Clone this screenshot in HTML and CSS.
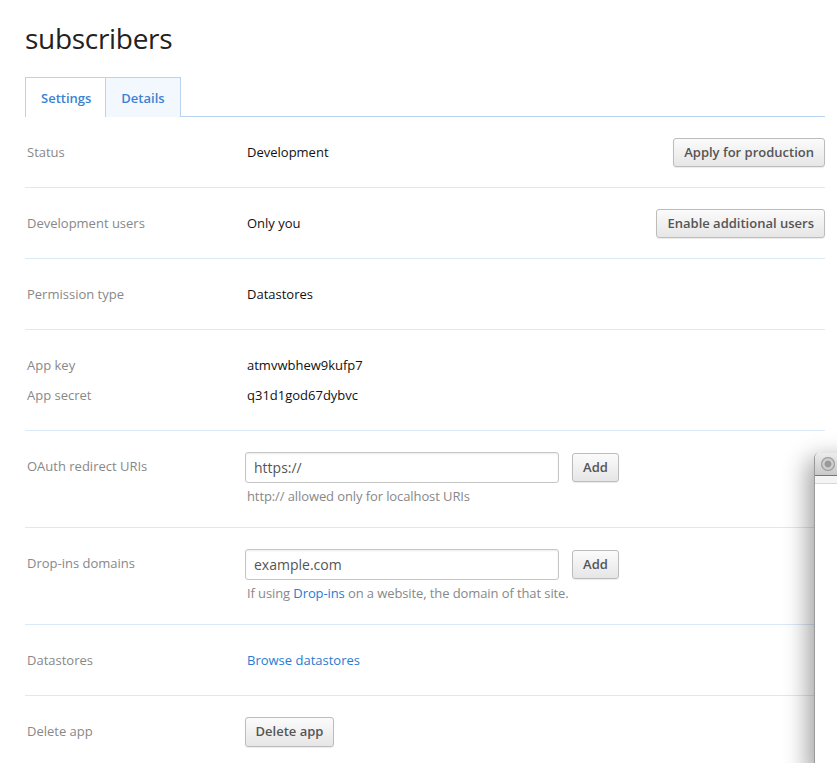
FILE: index.html
```html
<!DOCTYPE html>
<html>
<head>
<meta charset="utf-8">
<link rel="stylesheet" href="styles.css">
</head>
<body>
<div class="page">
  <h1 class="title">subscribers</h1>
  <div class="tabs">
    <div class="tab active">Settings</div>
    <div class="tab">Details</div>
  </div>
  <div class="rows">
    <div class="row">
      <div class="label">Status</div>
      <div class="value">Development</div>
      <div class="action"><button class="btn">Apply for production</button></div>
    </div>
    <div class="row">
      <div class="label">Development users</div>
      <div class="value">Only you</div>
      <div class="action"><button class="btn">Enable additional users</button></div>
    </div>
    <div class="row">
      <div class="label">Permission type</div>
      <div class="value">Datastores</div>
    </div>
    <div class="row multi">
      <div class="pair"><div class="label">App key</div><div class="value">atmvwbhew9kufp7</div></div>
      <div class="pair"><div class="label">App secret</div><div class="value">q31d1god67dybvc</div></div>
    </div>
    <div class="row form">
      <div class="label">OAuth redirect URIs</div>
      <div class="field">
        <div class="inputline">
          <input class="input" type="text" value="https://">
          <button class="btn small">Add</button>
        </div>
        <div class="help">http:// allowed only for localhost URIs</div>
      </div>
    </div>
    <div class="row form">
      <div class="label">Drop-ins domains</div>
      <div class="field">
        <div class="inputline">
          <input class="input" type="text" value="example.com">
          <button class="btn small">Add</button>
        </div>
        <div class="help">If using <a class="link" href="#">Drop-ins</a> on a website, the domain of that site.</div>
      </div>
    </div>
    <div class="row">
      <div class="label">Datastores</div>
      <div class="value"><a class="link" href="#">Browse datastores</a></div>
    </div>
    <div class="row last">
      <div class="label">Delete app</div>
      <div class="field"><button class="btn del">Delete app</button></div>
    </div>
  </div>
</div>
<div class="window">
  <div class="titlebar"><span class="close"></span></div>
  <div class="toolbar"></div>
</div>
</body>
</html>
```
FILE: styles.css
```css
html, body {
  margin: 0;
  padding: 0;
  background: #fff;
  font-family: "Open Sans", "Noto Sans", sans-serif;
  font-size: 13px;
  color: #222;
  overflow: hidden;
  height: 763px;
}
.page {
  margin-left: 25px;
  width: 800px;
}
.title {
  margin: 0;
  padding-top: 19px;
  height: 77px;
  box-sizing: border-box;
  font-size: 28px;
  font-weight: 400;
  line-height: 38px;
  color: #222;
  letter-spacing: -0.3px;
}
.tabs {
  display: flex;
  height: 40px;
  box-sizing: border-box;
  border-bottom: 1px solid #b8d3ef;
}
.tab {
  height: 40px;
  box-sizing: border-box;
  border: 1px solid #b8d3ef;
  border-bottom: none;
  background: #f3f8fe;
  color: #3a82d4;
  font-weight: 600;
  line-height: 40px;
  padding: 0 15px;
}
.tab.active {
  background: #fff;
  height: 40px;
  margin-bottom: -1px;
  padding: 0 14px 0 15px;
}
.tab + .tab {
  border-left: none;
}
.row {
  display: flex;
  align-items: flex-start;
  padding: 20px 0;
  border-bottom: 1px solid #dbe8f6;
  line-height: 30px;
}
.row.last {
  border-bottom: none;
}
.row.multi {
  flex-direction: column;
}
.pair {
  display: flex;
}
.label {
  width: 220px;
  padding-left: 2px;
  color: #888;
  flex-shrink: 0;
}
.value {
  color: #111;
  flex: 1;
}
.action {
  margin-left: auto;
  display: flex;
  align-items: center;
  height: 30px;
}
.field {
  margin-left: -2px;
}
.form .field {
  padding-top: 1px;
}
.inputline {
  display: flex;
  align-items: center;
  height: 31px;
}
.input {
  width: 314px;
  height: 31px;
  box-sizing: border-box;
  border: 1px solid #c6c6c6;
  border-radius: 3px;
  box-shadow: inset 0 1px 2px rgba(0,0,0,0.08);
  padding: 0 8px;
  font-family: "Open Sans", "Noto Sans", sans-serif;
  font-size: 14px;
  color: #555;
  outline: none;
}
.help {
  margin-top: 2px;
  line-height: 22px;
  padding-left: 2px;
  color: #888;
  letter-spacing: -0.1px;
}
.form {
  padding-bottom: 20px;
}
.link {
  color: #2a7bd3;
  text-decoration: none;
}
.btn {
  height: 29px;
  box-sizing: border-box;
  border: 1px solid #bcbcbc;
  border-radius: 3px;
  background: linear-gradient(#fbfbfb, #e6e6e6);
  box-shadow: 0 1px 1px rgba(0,0,0,0.08);
  color: #555;
  font-family: "Open Sans", "Noto Sans", sans-serif;
  font-size: 13px;
  font-weight: 600;
  padding: 0 10px;
  line-height: 27px;
}
.btn.small {
  margin-left: 13px;
  width: 47px;
  padding: 0;
  height: 29px;
}
.btn.del {
  height: 30px;
  width: 89px;
  padding: 0;
}
.window {
  position: absolute;
  left: 814px;
  top: 453px;
  width: 60px;
  height: 320px;
  background: #fff;
  border-left: 1px solid #9a9a9a;
  border-radius: 5px 0 0 0;
  box-shadow: -6px 6px 24px rgba(0,0,0,0.38);
}
.titlebar {
  height: 22px;
  border-radius: 5px 0 0 0;
  background: linear-gradient(#ececec, #c9c9c9);
  border-bottom: 1px solid #777;
  position: relative;
}
.close {
  position: absolute;
  left: 6px;
  top: 4px;
  width: 14px;
  height: 14px;
  border-radius: 50%;
  background: radial-gradient(circle, #9a9a9a 0 3px, #d6d6d6 4px, #b3b3b3 7px);
  box-shadow: inset 0 0 0 1px #a0a0a0;
}
.toolbar {
  height: 7px;
  background: #f4f4f4;
  border-bottom: 1px solid #d8d8d8;
}
```
